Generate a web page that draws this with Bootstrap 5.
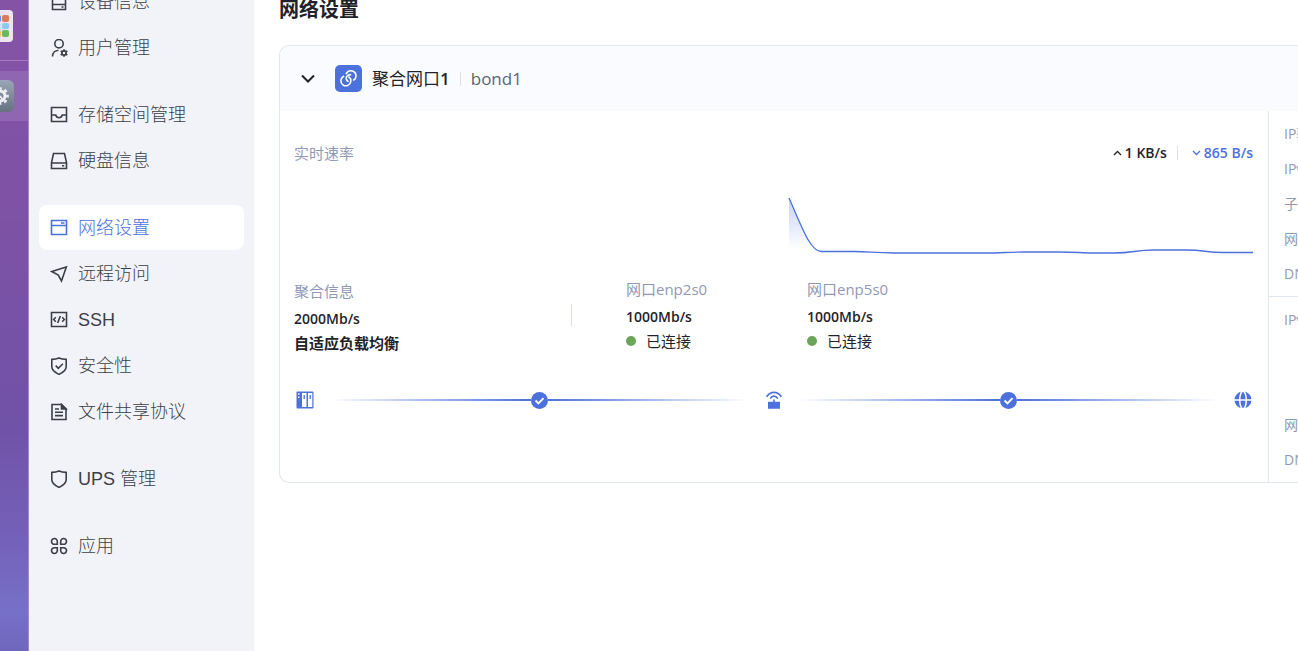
<!DOCTYPE html>
<html lang="zh-CN">
<head>
<meta charset="utf-8">
<meta name="viewport" content="width=device-width, initial-scale=1">
<title>网络设置</title>
<link href="https://cdn.jsdelivr.net/npm/bootstrap@5.3.0/dist/css/bootstrap.min.css" rel="stylesheet">
<style>
  :root { --blue: #4c71dd; --ink: #1f2329; --muted: #8f99b5; --line: #e2e6f1; }
  body { font-family: "Open Sans", "Noto Sans CJK SC", sans-serif; font-size: 15px; line-height: 24px; color: var(--ink); background: #fff; }
  .dock { width: 29px; border-right: 1px solid #a585c8; background: linear-gradient(#8453a6 0, #7f52a5 30%, #7052a7 65%, #7460b8 82%, #7770c8 94%, #6f66bd 100%); }
  .dock-top { height: 61px; border-bottom: 1px solid #a17cbd; }
  .dock-on { height: 50px; margin-top: 10px; background: #8e66b1; }
  .dock svg { display: block; }
  .side { width: 225px; background: #f2f3f9; padding: 0 10px; }
  .side-list { margin-top: -21px; }
  .side-group { display: flex; flex-direction: column; gap: 1px; margin-bottom: 22px; }
  .side-link { height: 45px; padding: 0 11px; gap: 10px; border-radius: 8px; font: 300 18px/24px "Liberation Sans", "Noto Sans CJK SC", sans-serif; color: #3c3f46; text-decoration: none; }
  .side-link svg { width: 18px; height: 18px; margin-top: 1px; fill: none; stroke: currentColor; stroke-width: 1.6; }
  .side-link.active { background: #fff; color: var(--blue); }
  .page { padding-left: 25px; }
  .page-title { font-size: 20px; font-weight: 700; line-height: 30px; margin: -5px 0 20px; }
  .net-card { border: 1px solid var(--line); border-right: 0; border-radius: 10px 0 0 10px; overflow: hidden; }
  .net-head { height: 65px; background: #fafbfe; padding-left: 20px; }
  .net-head button { width: 16px; height: 16px; }
  .net-tile { width: 27px; height: 27px; margin: 0 10px 0 19px; border-radius: 5px; background: var(--blue); }
  .net-name { font-size: 17px; }
  .bond { font-size: 17px; color: #5b6377; }
  .rule { width: 1px; height: 14px; background: #dcdfe6; }
  .head-rule { margin: 0 10px; }
  .rate-rule { margin: 0 10px; }
  .net-body { height: 371px; }
  .net-main { padding: 30px 15px 0 14px; }
  .net-side { width: 30px; border-left: 1px solid var(--line); color: var(--muted); font-size: 14px; white-space: nowrap; overflow: hidden; }
  .net-side div { padding-left: 15px; }
  .net-side p { margin: 0; height: 35px; }
  .v4 { height: 186px; padding-top: 11px; border-bottom: 1px solid var(--line); }
  .v6 { padding-top: 11px; }
  .v6 p:first-child { height: 105px; }
  .soft { color: var(--muted); }
  .rate, .speed { font-size: 14px; font-weight: 600; }
  .rate { margin-left: 3px; }
  .down { color: var(--blue); }
  .chart { height: 64px; margin-top: 29px; }
  .info { margin-top: 19px; }
  .info .soft { margin-bottom: 4px; }
  .agg { width: 277px; padding-top: 2px; }
  .agg-rule { height: 22px; margin: 27px 54px 0 0; }
  .port { width: 181px; }
  .port-state { gap: 10px; }
  .dot { width: 10px; height: 10px; border-radius: 50%; background: #6ba55a; }
  .path-row { margin-top: 36px; padding: 0 1px 0 2px; gap: 16px; }
  .wire { height: 2px; background: linear-gradient(90deg, #fff, var(--blue)); }
  .wire-out { background: linear-gradient(90deg, var(--blue), #fff); }
</style>
</head>
<body>
<div class="d-flex vh-100 overflow-hidden">
  <aside class="dock flex-shrink-0 overflow-hidden">
    <div class="dock-top"><svg width="13" height="42" viewBox="0 0 13 42"><rect x="-18" y="10" width="31" height="32" rx="4" fill="#eee3f1"/><rect x="-5" y="15" width="6" height="7" rx="2" fill="#678bdc"/><rect x="2" y="15" width="7" height="7" rx="2" fill="#dd7859"/><rect x="-5" y="23" width="6" height="6" rx="2" fill="#c6dcf5"/><rect x="2" y="23" width="7" height="6" rx="2" fill="#88c9f1"/><rect x="-5" y="30" width="6" height="7" rx="2" fill="#edba72"/><rect x="2" y="30" width="7" height="7" rx="2" fill="#6aba55"/></svg></div>
    <div class="dock-on"><svg width="14" height="41" viewBox="0 0 14 41"><defs><linearGradient id="g1" x1="0" y1="0" x2="0" y2="1"><stop stop-color="#9ba6b8"/><stop offset="1" stop-color="#65717d"/></linearGradient></defs><rect x="-18" y="9" width="32" height="32" rx="6" fill="url(#g1)"/><circle cx="0" cy="25" r="5" fill="none" stroke="#eef1f4" stroke-width="3"/><circle cx="0" cy="25" r="7.500" fill="none" stroke="#eef1f4" stroke-width="2.600" stroke-dasharray="3 2.890" stroke-dashoffset="1.500"/><path d="M0 25l3 4" stroke="#eef1f4" stroke-width="1.500"/></svg></div>
  </aside>

  <nav class="side flex-shrink-0 overflow-hidden">
    <div class="side-list">
      <div class="side-group">
        <a href="#" class="side-link d-flex align-items-center"><svg viewBox="0 0 18 18"><path d="M2.500 1.500h13v15h-13zM2.500 11.500h13M11.500 14h2"/></svg>设备信息</a>
        <a href="#" class="side-link d-flex align-items-center"><svg viewBox="0 0 18 18"><circle cx="9" cy="4.700" r="4.200"/><path d="M2.500 17.500c0-3.500 2.500-6 6-6.300"/><circle cx="14" cy="14" r="2.100"/><path stroke-width="1.700" d="M14 10.200v1.700M14 16.100v1.700M10.700 12.100l1.500.9M15.800 15l1.500.9M10.700 15.900l1.500-.9M15.800 13l1.500-.9"/></svg>用户管理</a>
      </div>
      <div class="side-group">
        <a href="#" class="side-link d-flex align-items-center"><svg viewBox="0 0 18 18"><path d="M1.500 1.500h15v14h-15zM1.500 9h4.200c.5 1.800 1.700 2.700 3.300 2.700s2.800-.9 3.300-2.700h4.200"/></svg>存储空间管理</a>
        <a href="#" class="side-link d-flex align-items-center"><svg viewBox="0 0 18 18"><path d="M3.500 1.500h11l2 9v6h-15v-6zM1.500 11h15M12 13.800h2.200"/></svg>硬盘信息</a>
      </div>
      <div class="side-group">
        <a href="#" class="side-link active d-flex align-items-center" aria-current="page"><svg viewBox="0 0 18 18"><path d="M1.500 1.500h15v14h-15zM1.500 6.500h15M11 4h3.500"/></svg>网络设置</a>
        <a href="#" class="side-link d-flex align-items-center"><svg viewBox="0 0 18 18"><path d="M1.800 6.500L16.300 2l-4.800 14-3.200-6z"/></svg>远程访问</a>
        <a href="#" class="side-link d-flex align-items-center"><svg viewBox="0 0 18 18"><path d="M1.500 1.500h15v14h-15zM5.800 6.300L3.700 8.500l2.100 2.200M12.200 6.300l2.100 2.200-2.100 2.200M10.300 5l-2.600 7"/></svg>SSH</a>
        <a href="#" class="side-link d-flex align-items-center"><svg viewBox="0 0 18 18"><path d="M9 .9c2.200.9 4.500 1.300 7.200 1.500v7.100c0 3.700-3 6-7.200 7.900-4.200-1.900-7.200-4.200-7.200-7.900V2.400C4.500 2.200 6.800 1.800 9 .9zM5.700 8.600l2.600 2.700 4.600-4.500"/></svg>安全性</a>
        <a href="#" class="side-link d-flex align-items-center"><svg viewBox="0 0 18 18"><path d="M2 1.500h9.500L16 6v10.500H2zM5 6h4M5 9.300h8M5 12.600h8"/><path fill="currentColor" d="M11.500 1.500V6H16z"/></svg>文件共享协议</a>
      </div>
      <div class="side-group">
        <a href="#" class="side-link d-flex align-items-center"><svg viewBox="0 0 18 18"><path d="M9 .9c2.200.9 4.500 1.300 7.200 1.500v7.100c0 3.700-3 6-7.200 7.900-4.200-1.900-7.200-4.200-7.200-7.900V2.400C4.500 2.200 6.800 1.800 9 .9z"/></svg>UPS 管理</a>
      </div>
      <div class="side-group">
        <a href="#" class="side-link d-flex align-items-center"><svg viewBox="0 0 18 18"><path d="M7.300 7.300H4.600a2.900 2.900 0 1 1 2.700-2.700zM10.700 7.300h2.700a2.900 2.900 0 1 0-2.700-2.700zM7.300 10.700H4.600a2.900 2.900 0 1 0 2.700 2.700zM10.700 10.700h2.700a2.900 2.900 0 1 1-2.700 2.700z"/></svg>应用</a>
      </div>
    </div>
  </nav>

  <main class="page flex-grow-1 overflow-hidden">
    <h1 class="page-title">网络设置</h1>
    <section class="net-card">
      <header class="net-head d-flex align-items-center">
        <button type="button" class="btn p-0 border-0 d-flex" aria-label="收起"><svg width="16" height="16" viewBox="0 0 16 16" fill="none" stroke="#1f2329" stroke-width="2"><path d="M2 4.500l6 6 6-6"/></svg></button>
        <span class="net-tile d-flex align-items-center justify-content-center"><svg width="19" height="19" viewBox="0 0 19 19" fill="none" stroke="#fff" stroke-width="1.600" stroke-linecap="round"><path d="M4.600 7.300A5 5 0 1 0 11.800 12.600C12 10.600 11.300 9 9.900 8"/><path d="M7.300 4.600C8.600 2.400 11 1.300 13.500 2a5 5 0 0 1 1.200 9M11.500 5.600C8.700 5.700 6.900 7.600 7.300 10c.2 1 .8 1.900 1.700 2.400"/></svg></span>
        <span class="net-name">聚合网口<span class="fw-semibold">1</span></span>
        <span class="rule head-rule"></span>
        <span class="bond">bond1</span>
      </header>
      <div class="net-body d-flex">
        <div class="net-main flex-grow-1">
          <div class="d-flex align-items-center">
            <span class="soft me-auto">实时速率</span>
            <svg width="9" height="8" viewBox="0 0 9 8" fill="none" stroke="#1f2329" stroke-width="1.300"><path d="M1 6l3.500-3.500L8 6"/></svg>
            <span class="rate">1 KB/s</span>
            <span class="rule rate-rule"></span>
            <svg class="ms-1" width="9" height="8" viewBox="0 0 9 8" fill="none" stroke="#4c71dd" stroke-width="1.300"><path d="M1 2l3.500 3.500L8 2"/></svg>
            <span class="rate down">865 B/s</span>
          </div>
          <svg class="chart d-block w-100" viewBox="0 0 959 64" preserveAspectRatio="none"><defs><linearGradient id="g2" x1="0" y1="0" x2="0" y2="1"><stop stop-color="#4c71dd" stop-opacity=".32"/><stop offset=".95" stop-color="#4c71dd" stop-opacity="0"/></linearGradient></defs><path fill="url(#g2)" d="M495 4C508 33 516 55 527 58H495z"/><path fill="none" stroke="#4c71dd" stroke-width="1.300" d="M495 4C508 33 516 57 527 57.500H560C575 57.500 580 59 600 59H690C710 59 712 58 730 58H765C785 58 785 59 805 59H820C840 59 840 56 860 56H892C912 56 910 58.500 930 58.500H959"/></svg>
          <div class="info d-flex align-items-start">
            <div class="agg"><div class="soft">聚合信息</div><div class="speed">2000Mb/s</div><div class="fw-bold">自适应负载均衡</div></div>
            <span class="rule agg-rule"></span>
            <div class="port"><div class="soft">网口enp2s0</div><div class="speed">1000Mb/s</div><div class="port-state d-flex align-items-center"><span class="dot"></span><span>已连接</span></div></div>
            <div class="port"><div class="soft">网口enp5s0</div><div class="speed">1000Mb/s</div><div class="port-state d-flex align-items-center"><span class="dot"></span><span>已连接</span></div></div>
          </div>
          <div class="path-row d-flex align-items-center">
            <svg width="18" height="18" viewBox="0 0 18 18"><rect x=".5" y=".5" width="17" height="17" rx="1" fill="#4c71dd"/><path fill="#fff" d="M6 2h4.500v14H6zM12 2h4.300v14H12zM2 2.200h1.500v1.500H2zM2 5.500h1.500V7H2z"/><path stroke="#4c71dd" stroke-width="1.300" d="M8.200 4v4M14.200 4v4"/></svg>
            <div class="d-flex align-items-center flex-grow-1">
              <div class="wire flex-grow-1"></div>
              <svg width="17" height="17" viewBox="0 0 16 16"><circle cx="8" cy="8" r="8" fill="#4c71dd"/><path d="M4.300 8l2.700 2.700 4.800-4.900" fill="none" stroke="#fff" stroke-width="1.800"/></svg>
              <div class="wire wire-out flex-grow-1"></div>
            </div>
            <svg width="18" height="18" viewBox="0 0 18 18"><path fill="#4c71dd" d="M3.500 10.700h4.700V8.500h1.600v2.200h4.700a.5.500 0 0 1 .5.500v6a.5.500 0 0 1-.5.500h-11a.5.500 0 0 1-.5-.5v-6a.5.500 0 0 1 .5-.5z"/><path fill="none" stroke="#4c71dd" stroke-width="1.700" d="M1.600 5.800c4-6 10.800-6 14.800 0M5.200 7.600c2-3.200 5.600-3.200 7.600 0"/></svg>
            <div class="d-flex align-items-center flex-grow-1">
              <div class="wire flex-grow-1"></div>
              <svg width="17" height="17" viewBox="0 0 16 16"><circle cx="8" cy="8" r="8" fill="#4c71dd"/><path d="M4.300 8l2.700 2.700 4.800-4.900" fill="none" stroke="#fff" stroke-width="1.800"/></svg>
              <div class="wire wire-out flex-grow-1"></div>
            </div>
            <svg width="18" height="18" viewBox="0 0 18 18"><circle cx="9" cy="9" r="8.500" fill="#4c71dd"/><path fill="none" stroke="#fff" stroke-width="1.500" d="M0 9h18"/><ellipse cx="9" cy="9" rx="3.300" ry="8.800" fill="none" stroke="#fff" stroke-width="1.500"/></svg>
          </div>
        </div>
        <aside class="net-side flex-shrink-0">
          <div class="v4"><p>IP获</p><p>IPv</p><p>子</p><p>网</p><p>DN</p></div>
          <div class="v6"><p>IPv</p><p>网</p><p>DN</p></div>
        </aside>
      </div>
    </section>
  </main>
</div>
<script src="https://cdn.jsdelivr.net/npm/bootstrap@5.3.0/dist/js/bootstrap.bundle.min.js"></script>
</body>
</html>
